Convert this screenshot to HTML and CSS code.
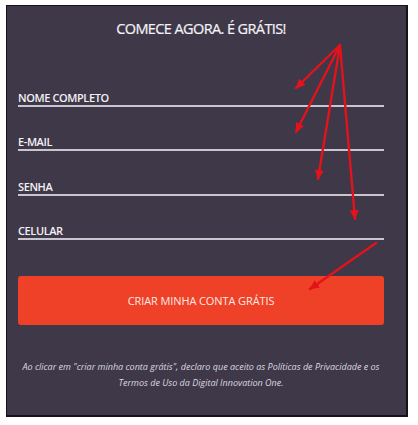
FILE: index.html
```html
<!DOCTYPE html>
<html lang="pt-BR">
<head>
<meta charset="utf-8">
<title>Comece agora</title>
<link rel="stylesheet" href="styles.css">
</head>
<body>
<div class="panel">
  <h1 class="title">COMECE AGORA. É GRÁTIS!</h1>
  <form class="form">
    <div class="field"><span class="label">NOME COMPLETO</span></div>
    <div class="field"><span class="label">E-MAIL</span></div>
    <div class="field"><span class="label">SENHA</span></div>
    <div class="field"><span class="label">CELULAR</span></div>
    <div class="button">CRIAR MINHA CONTA GRÁTIS</div>
  </form>
  <p class="legal">Ao clicar em "criar minha conta grátis", declaro que aceito as Políticas de Privacidade e os Termos de Uso da Digital Innovation One.</p>
</div>
<svg class="arrows" width="418" height="425" viewBox="0 0 418 425">
  <defs>
    <marker id="head" markerUnits="userSpaceOnUse" markerWidth="10" markerHeight="9" refX="9" refY="4.5" orient="auto">
      <path d="M0 0 L10 4.5 L0 9 Z" fill="#e3121b"/>
    </marker>
  </defs>
  <g stroke="#e3121b" stroke-width="2.4" stroke-linecap="round" marker-end="url(#head)">
    <line x1="340" y1="45" x2="296" y2="88"/>
    <line x1="340" y1="45" x2="296" y2="132"/>
    <line x1="340" y1="45" x2="318" y2="179"/>
    <line x1="340" y1="45" x2="355" y2="219"/>
    <line x1="376" y1="243" x2="310" y2="289"/>
  </g>
</svg>
</body>
</html>
```
FILE: styles.css
```css
html, body {
  margin: 0;
  padding: 0;
  background: #ffffff;
}
body {
  position: relative;
  width: 418px;
  height: 425px;
  font-family: "Open Sans", "Noto Sans", sans-serif;
}
.panel {
  box-sizing: border-box;
  margin: 5px 0 0 6px;
  width: 402px;
  height: 412px;
  background: #3e3848;
  border: 1px solid #151318;
  border-right-width: 2px;
  border-bottom-width: 2px;
  padding: 13px 22px 0 11px;
  display: flex;
  flex-direction: column;
}
.title {
  margin: 0;
  font-size: 14.5px;
  line-height: 20px;
  font-weight: 400;
  color: #f4f2f6;
  text-align: center;
  letter-spacing: -0.6px;
  -webkit-text-stroke: 0.2px #f4f2f6;
}
.form {
  margin-top: 52px;
  display: flex;
  flex-direction: column;
  gap: 28.3px;
}
.field {
  border-bottom: 2px solid #c9c5cf;
}
.label {
  display: block;
  font-size: 11px;
  line-height: 14px;
  font-weight: 600;
  color: #f3f1f5;
  letter-spacing: -0.4px;
}
.button {
  margin-top: 8px;
  height: 49px;
  border-radius: 3px;
  background: #ef4127;
  color: #fbe9e5;
  font-size: 11px;
  font-weight: 400;
  display: flex;
  align-items: center;
  justify-content: center;
  letter-spacing: -0.1px;
}
.legal {
  margin: 34px 0 0;
  font-size: 9px;
  line-height: 16px;
  font-style: italic;
  color: #dcd8e0;
  text-align: center;
}
.arrows {
  position: absolute;
  left: 0;
  top: 0;
  pointer-events: none;
}
```
